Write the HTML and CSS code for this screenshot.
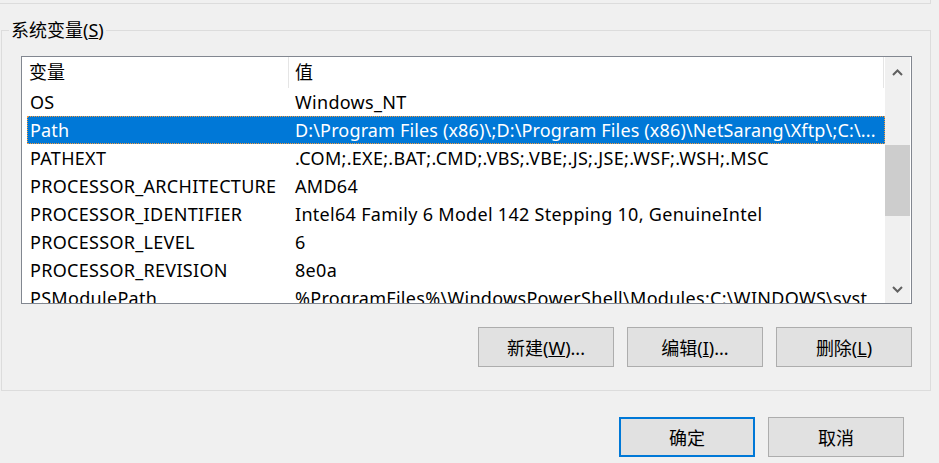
FILE: index.html
```html
<!DOCTYPE html>
<html lang="zh-CN">
<head>
    <meta charset="UTF-8">
    <meta name="viewport" content="width=device-width, initial-scale=1.0">
    <title>环境变量</title>
    <link rel="stylesheet" href="styles.css">
</head>
<body>
    <div class="prev-group"></div>

    <div class="group">
        <span class="group-title">系统变量(<u>S</u>)</span>

        <div class="var-list">
            <div class="list-body">
                <div class="list-header">
                    <div class="col-head col-name">变量</div>
                    <div class="col-head col-value">值</div>
                </div>
                <div class="row"><span class="cell">OS</span><span class="cell">Windows_NT</span></div>
                <div class="row selected"><span class="cell">Path</span><span class="cell">D:\Program Files (x86)\;D:\Program Files (x86)\NetSarang\Xftp\;C:\...</span></div>
                <div class="row"><span class="cell">PATHEXT</span><span class="cell">.COM;.EXE;.BAT;.CMD;.VBS;.VBE;.JS;.JSE;.WSF;.WSH;.MSC</span></div>
                <div class="row"><span class="cell">PROCESSOR_ARCHITECTURE</span><span class="cell">AMD64</span></div>
                <div class="row"><span class="cell">PROCESSOR_IDENTIFIER</span><span class="cell">Intel64 Family 6 Model 142 Stepping 10, GenuineIntel</span></div>
                <div class="row"><span class="cell">PROCESSOR_LEVEL</span><span class="cell">6</span></div>
                <div class="row"><span class="cell">PROCESSOR_REVISION</span><span class="cell">8e0a</span></div>
                <div class="row"><span class="cell">PSModulePath</span><span class="cell">%ProgramFiles%\WindowsPowerShell\Modules;C:\WINDOWS\syst</span></div>
            </div>
            <div class="scrollbar">
                <div class="scroll-btn">
                    <svg width="11" height="7" viewBox="0 0 11 7"><polyline points="1,6 5.5,1.5 10,6" fill="none" stroke="#606060" stroke-width="2"/></svg>
                </div>
                <div class="scroll-track"><div class="scroll-thumb"></div></div>
                <div class="scroll-btn down">
                    <svg width="11" height="7" viewBox="0 0 11 7"><polyline points="1,1 5.5,5.5 10,1" fill="none" stroke="#606060" stroke-width="2"/></svg>
                </div>
            </div>
        </div>

        <div class="group-buttons">
            <button class="btn">新建(<u>W</u>)...</button>
            <button class="btn">编辑(<u>I</u>)...</button>
            <button class="btn">删除(<u>L</u>)</button>
        </div>
    </div>

    <div class="dialog-buttons">
        <button class="btn default">确定</button>
        <button class="btn">取消</button>
    </div>
</body>
</html>
```

FILE: styles.css
```css
* {
    margin: 0;
    padding: 0;
    box-sizing: border-box;
}

body {
    width: 939px;
    height: 463px;
    overflow: hidden;
    background-color: #f0f0f0;
    font-family: "Noto Sans", "Noto Sans CJK SC", sans-serif;
    font-size: 18px;
    color: #000;
}

/* bottom edge of the user variables box above */
.prev-group {
    width: 931px;
    height: 4px;
    border-right: 1px solid #dcdcdc;
    border-bottom: 1px solid #dcdcdc;
}

.group {
    position: relative;
    width: 930px;
    height: 361px;
    margin: 26px 0 0 1px;
    border: 1px solid #dcdcdc;
    padding: 25px 18px 0 19px;
}

.group-title {
    position: absolute;
    top: -12px;
    left: 7px;
    padding: 0 2px;
    line-height: 22px;
    background-color: #f0f0f0;
}

.var-list {
    display: flex;
    height: 248px;
    border: 1px solid #828790;
    background-color: #fff;
}

.list-body {
    width: 863px;
    overflow: hidden;
}

.list-header {
    display: flex;
    height: 31px;
}

.col-head {
    height: 31px;
    line-height: 31px;
    border-right: 1px solid #e5e5e5;
}

.col-name {
    width: 267px;
    padding-left: 7px;
}

.col-value {
    width: 595px;
    padding-left: 6px;
}

.row {
    display: grid;
    grid-template-columns: 265px 1fr;
    height: 28px;
    margin-left: 5px;
    line-height: 26px;
    letter-spacing: 0.3px;
    border: 1px solid transparent;
}

.row.selected {
    background-color: #0078d7;
    color: #fff;
    letter-spacing: 0.15px;
    border: 1px dotted #f59a3c;
}

.cell {
    padding-left: 2px;
    white-space: nowrap;
    overflow: hidden;
}

.scrollbar {
    display: flex;
    flex-direction: column;
    width: 25px;
    background-color: #f0f0f0;
}

.scroll-btn {
    height: 31px;
    display: flex;
    align-items: center;
    justify-content: center;
}

.scroll-btn.down {
    height: 27px;
}

.scroll-track {
    flex: 1;
    padding-top: 57px;
}

.scroll-thumb {
    height: 71px;
    background-color: #cdcdcd;
}

.group-buttons {
    display: flex;
    justify-content: flex-end;
    gap: 13px;
    margin-top: 23px;
}

.dialog-buttons {
    display: flex;
    justify-content: flex-end;
    gap: 13px;
    margin-top: 26px;
    padding-right: 35px;
}

.btn {
    width: 136px;
    height: 40px;
    background-color: #e1e1e1;
    border: 1px solid #adadad;
    font-family: inherit;
    font-size: 18px;
    color: #000;
}

.btn.default {
    border: 2px solid #0078d7;
}
```
